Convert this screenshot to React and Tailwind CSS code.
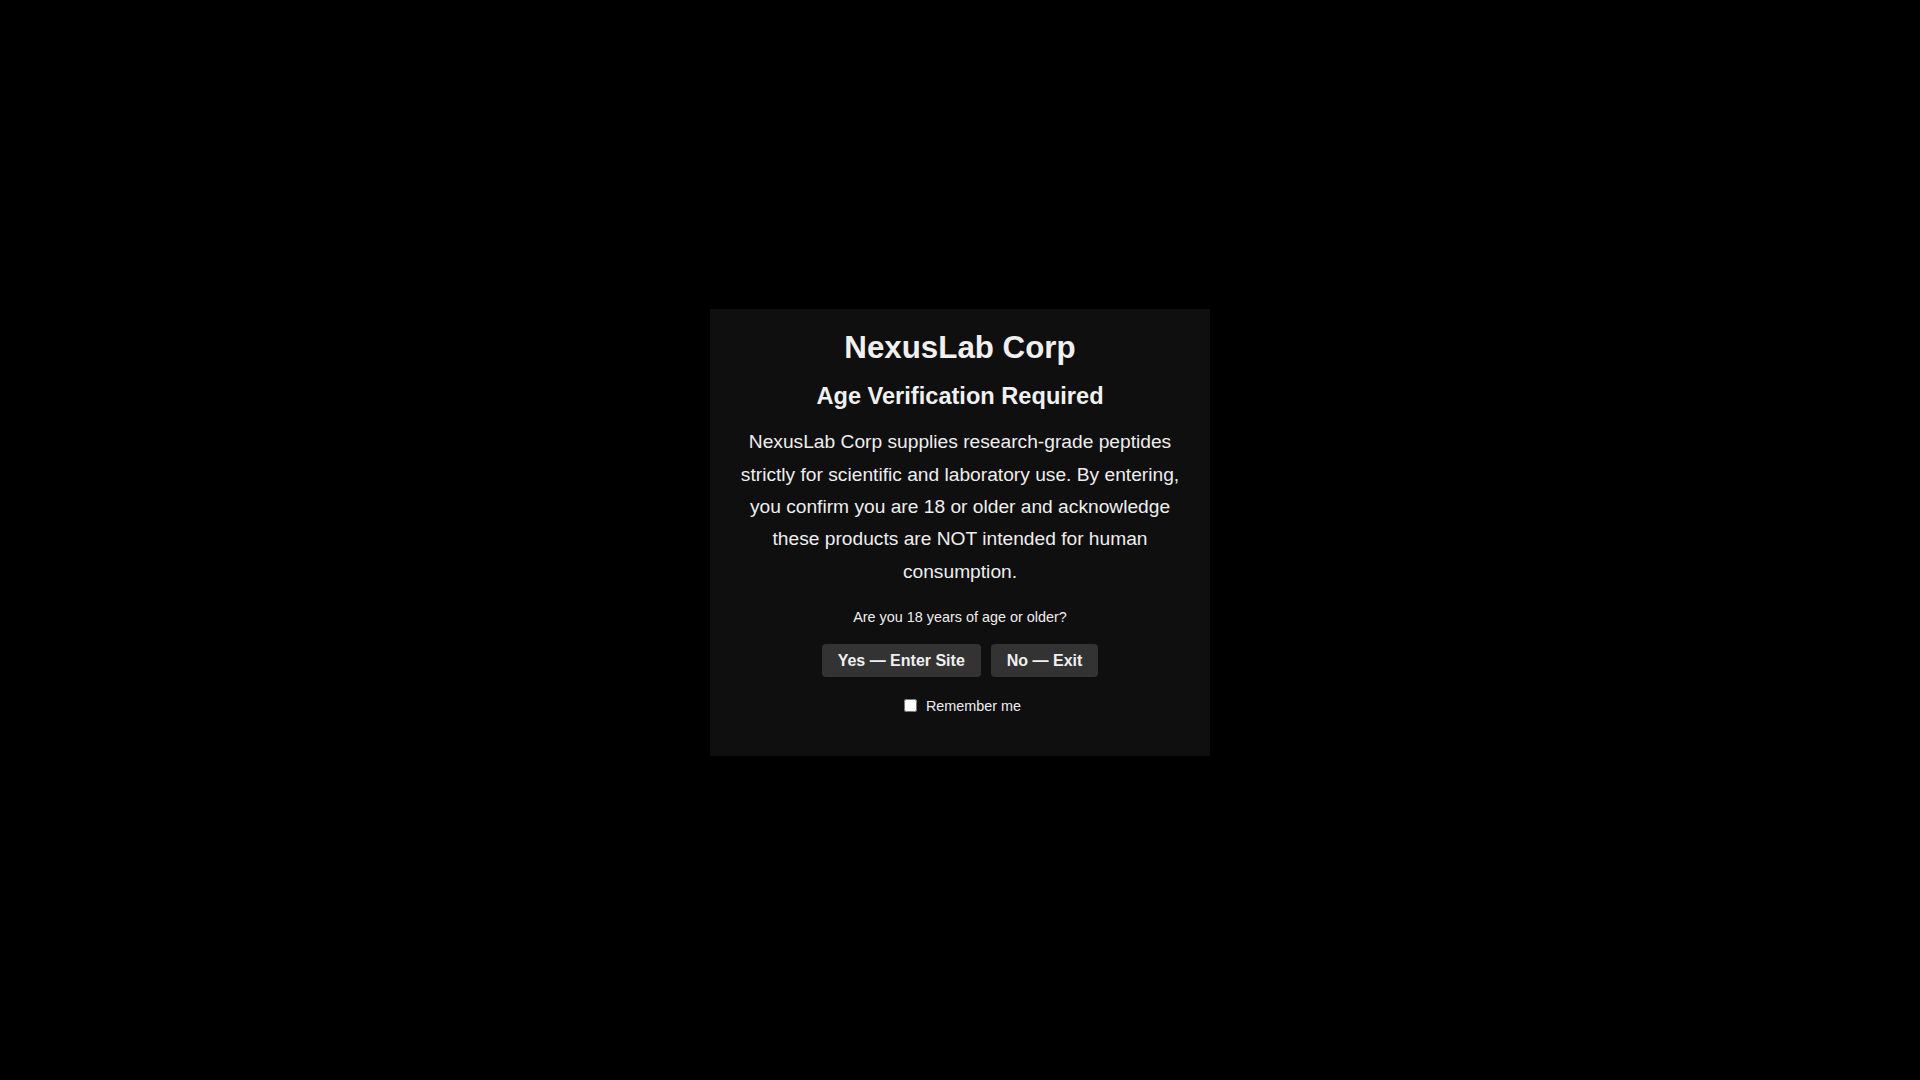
export default function App() {
  return (
    <div
      className="min-h-screen w-full bg-black flex items-center justify-center pb-[15px]"
      style={{ fontFamily: '"Liberation Sans", Arial, sans-serif' }}
    >
      <div className="w-[500px] bg-[#0f0f0f] px-[30px] pt-[21px] pb-[42px] text-center text-[#eeeeee]">
        <h1 className="text-[31.3px] leading-[36px] font-bold text-[#f0f0f0]">NexusLab Corp</h1>
        <h2 className="mt-[16px] text-[23.6px] leading-[28px] font-bold text-[#f0f0f0]">
          Age Verification Required
        </h2>
        <p className="mt-[16px] text-[19.2px] leading-[32.4px] text-[#eeeeee]">
          NexusLab Corp supplies research-grade peptides strictly for scientific and laboratory use. By
          entering, you confirm you are 18 or older and acknowledge these products are NOT intended for
          human consumption.
        </p>
        <p className="mt-[21px] text-[14.4px] leading-[17px] text-[#eeeeee]">Are you 18 years of age or older?</p>
        <div className="mt-[18px] flex justify-center gap-[10px]">
          <button className="h-[33px] pt-px px-4 rounded-[4px] bg-[#333333] text-[16px] font-bold text-[#f0f0f0]">
            Yes — Enter Site
          </button>
          <button className="h-[33px] pt-px px-4 rounded-[4px] bg-[#333333] text-[16px] font-bold text-[#f0f0f0]">
            No — Exit
          </button>
        </div>
        <label className="mt-[20.5px] flex items-center justify-center text-[14.4px] leading-[16px] text-[#eeeeee]">
          <input type="checkbox" className="m-0 ml-[5px] mr-[9px] w-[13px] h-[13px]" />
          Remember me
        </label>
      </div>
    </div>
  );
}
